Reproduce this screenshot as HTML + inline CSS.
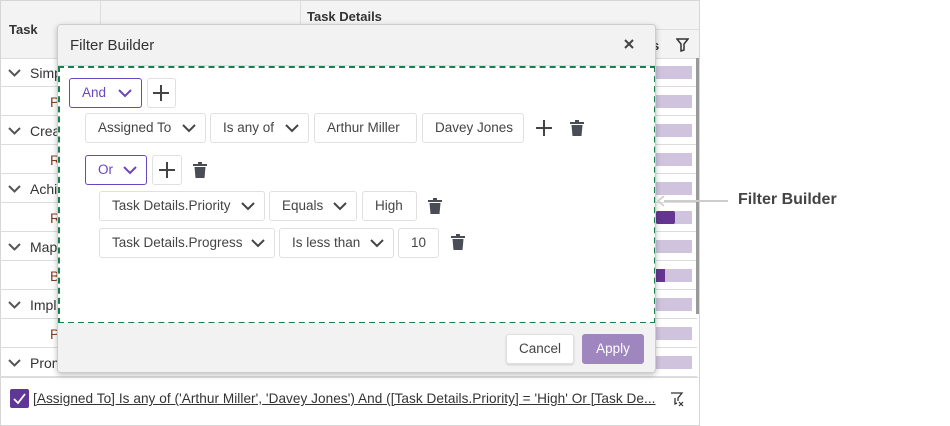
<!DOCTYPE html>
<html><head><meta charset="utf-8"><style>
*{box-sizing:border-box;margin:0;padding:0}
body{width:950px;height:426px;background:#fff;font-family:"Liberation Sans",sans-serif;font-size:13px;color:#333;position:relative;overflow:hidden}
.a{position:absolute}
.grid{left:0;top:0;width:700px;height:426px;border:1px solid #d6d6d6;background:#fff}
.hd{background:#f3f3f3}
.row{left:0;width:697px;height:29px;border-bottom:1px solid #ddd}
.bar{left:656px;width:36px;height:13px;background:#d0c3de}
.dlg{left:57px;top:24px;width:599px;height:349px;background:#fff;border:1px solid #ccc;border-radius:4px;box-shadow:0 2px 6px rgba(0,0,0,.25);overflow:hidden}
.box{position:absolute;border:1px solid #e0e0e0;border-radius:3px;height:30px;line-height:28px;padding-left:12px;color:#444;font-size:13.5px;background:#fff}
.box svg{position:absolute;right:9px;top:10px}
.pb{border-color:#6a45c0;color:#6a45c0}
.ic{position:absolute}
.tr{height:29px;position:relative;padding-left:22px}
.tr svg{position:absolute;left:0;top:4px}
</style></head><body>
<div class="a grid">
 <div class="a hd" style="left:0;top:0;width:698px;height:58px;border-bottom:1px solid #ddd"></div>
 <div class="a" style="left:99px;top:0;width:1px;height:58px;background:#ddd"></div>
 <div class="a" style="left:299px;top:0;width:1px;height:58px;background:#ddd"></div>
 <div class="a" style="left:300px;top:28px;width:398px;height:1px;background:#ddd"></div>
 <div class="a" style="left:8px;top:21px;font-weight:bold;font-size:13px">Task</div>
 <div class="a" style="left:306px;top:8px;font-weight:bold;font-size:13px">Task Details</div>
 <div class="a" style="left:651px;top:37px;font-weight:bold">s</div>
 <svg class="a" style="left:675px;top:37px" width="13" height="14" viewBox="0 0 13 14"><path d="M1 1h11L8 6v6l-3 1V6z" fill="none" stroke="#333" stroke-width="1.5"/></svg>
</div>
<div class="a row" style="top:58px"></div><div class="a row" style="top:87px"></div><div class="a row" style="top:116px"></div><div class="a row" style="top:145px"></div><div class="a row" style="top:174px"></div><div class="a row" style="top:203px"></div><div class="a row" style="top:232px"></div><div class="a row" style="top:261px"></div><div class="a row" style="top:290px"></div><div class="a row" style="top:319px"></div><div class="a row" style="top:348px"></div>
<div class="a" style="left:8px;top:65px;line-height:16px;font-size:14px">
<div class="tr"><svg width="13" height="9"><path d="M1 1l5.5 5.5L12 1" fill="none" stroke="#555" stroke-width="2"/></svg>Simp</div><div class="tr" style="padding-left:42px;color:#8a3a1c">P</div>
<div class="tr"><svg width="13" height="9"><path d="M1 1l5.5 5.5L12 1" fill="none" stroke="#555" stroke-width="2"/></svg>Crea</div><div class="tr" style="padding-left:42px;color:#8a3a1c">R</div>
<div class="tr"><svg width="13" height="9"><path d="M1 1l5.5 5.5L12 1" fill="none" stroke="#555" stroke-width="2"/></svg>Achi</div><div class="tr" style="padding-left:42px;color:#8a3a1c">R</div>
<div class="tr"><svg width="13" height="9"><path d="M1 1l5.5 5.5L12 1" fill="none" stroke="#555" stroke-width="2"/></svg>Map</div><div class="tr" style="padding-left:42px;color:#8a3a1c">B</div>
<div class="tr"><svg width="13" height="9"><path d="M1 1l5.5 5.5L12 1" fill="none" stroke="#555" stroke-width="2"/></svg>Impl</div><div class="tr" style="padding-left:42px;color:#8a3a1c">P</div>
<div class="tr"><svg width="13" height="9"><path d="M1 1l5.5 5.5L12 1" fill="none" stroke="#555" stroke-width="2"/></svg>Prom</div></div>
<div class="a bar" style="top:66px"></div><div class="a bar" style="top:95px"></div><div class="a bar" style="top:124px"></div><div class="a bar" style="top:153px"></div><div class="a bar" style="top:182px"></div>
<div class="a bar" style="top:211px"></div><div class="a" style="left:656px;top:211px;width:19px;height:13px;background:#643691;border-radius:2px"></div>
<div class="a bar" style="top:240px"></div>
<div class="a bar" style="top:269px"></div><div class="a" style="left:656px;top:269px;width:9px;height:13px;background:#643691"></div>
<div class="a bar" style="top:298px"></div><div class="a bar" style="top:327px"></div><div class="a bar" style="top:356px"></div>
<div class="a" style="left:696px;top:58px;width:3px;height:256px;background:#999"></div>
<div class="a" style="left:0;top:377px;width:699px;height:1px;background:#ddd"></div>
<div class="a" style="left:10px;top:389px;width:19px;height:19px;background:#5f3796;border-radius:2px"><svg width="19" height="19"><path d="M4 10l4 4 7-9" fill="none" stroke="#fff" stroke-width="1.8"/></svg></div>
<div class="a" style="left:33px;top:391px;font-size:13.6px;text-decoration:underline;color:#333;white-space:nowrap;letter-spacing:0.05px">[Assigned To] Is any of ('Arthur Miller', 'Davey Jones') And ([Task Details.Priority] = 'High' Or [Task De...</div>
<svg class="a" style="left:670px;top:392px" width="14" height="15"><path d="M1 1h11L8 6v3M5 6v6l2-1" fill="none" stroke="#333" stroke-width="1.3"/><path d="M9 10l4 4M13 10l-4 4" stroke="#333" stroke-width="1.2"/></svg>

<div class="a dlg">
 <div class="a" style="left:0;top:0;width:599px;height:41px;background:#f2f2f2;border-bottom:1px solid #ddd"></div>
 <div class="a" style="left:12px;top:12px;font-size:15px;color:#333">Filter Builder</div>
 <svg class="a" style="left:566px;top:14px" width="10" height="10"><path d="M1 1l8 8M9 1l-8 8" stroke="#444" stroke-width="2"/></svg>
 <div class="a" style="left:0;top:41px;width:598px;height:258px;border:2px dashed #1a7f4d"></div>
 <div class="a" style="left:0;top:298px;width:599px;height:51px;background:#f2f2f2"></div>
 <div class="box" style="left:448px;top:309px;width:68px;padding:0;text-align:center;box-shadow:0 1px 2px rgba(0,0,0,.15)">Cancel</div>
 <div class="box" style="left:524px;top:309px;width:62px;padding:0;text-align:center;background:#9f86bf;border-color:#9f86bf;color:#fff">Apply</div>
</div>

<div class="box pb" style="left:69px;top:78px;width:73px">And<svg width="14" height="9"><path d="M1 1l6 6 6-6" fill="none" stroke="#6a45c0" stroke-width="2"/></svg></div>
<div class="box" style="left:147px;top:78px;width:29px"></div>
<div class="box" style="left:85px;top:113px;width:121px">Assigned To<svg width="14" height="9"><path d="M1 1l6 6 6-6" fill="none" stroke="#444" stroke-width="2"/></svg></div>
<div class="box" style="left:210px;top:113px;width:99px">Is any of<svg width="14" height="9"><path d="M1 1l6 6 6-6" fill="none" stroke="#444" stroke-width="2"/></svg></div>
<div class="box" style="left:314px;top:113px;width:103px">Arthur Miller</div>
<div class="box" style="left:422px;top:113px;width:102px">Davey Jones</div>
<div class="box pb" style="left:85px;top:155px;width:62px">Or<svg width="14" height="9"><path d="M1 1l6 6 6-6" fill="none" stroke="#6a45c0" stroke-width="2"/></svg></div>
<div class="box" style="left:152px;top:155px;width:30px"></div>
<div class="box" style="left:99px;top:191px;width:166px">Task Details.Priority<svg width="14" height="9"><path d="M1 1l6 6 6-6" fill="none" stroke="#444" stroke-width="2"/></svg></div>
<div class="box" style="left:269px;top:191px;width:88px">Equals<svg width="14" height="9"><path d="M1 1l6 6 6-6" fill="none" stroke="#444" stroke-width="2"/></svg></div>
<div class="box" style="left:362px;top:191px;width:55px">High</div>
<div class="box" style="left:99px;top:228px;width:176px">Task Details.Progress<svg width="14" height="9"><path d="M1 1l6 6 6-6" fill="none" stroke="#444" stroke-width="2"/></svg></div>
<div class="box" style="left:279px;top:228px;width:115px">Is less than<svg width="14" height="9"><path d="M1 1l6 6 6-6" fill="none" stroke="#444" stroke-width="2"/></svg></div>
<div class="box" style="left:398px;top:228px;width:41px">10</div>

<svg class="ic" style="left:152px;top:84px" width="18" height="18"><path d="M9 1v16M1 9h16" stroke="#444" stroke-width="2"/></svg>
<svg class="ic" style="left:535px;top:119px" width="18" height="18"><path d="M9 1v16M1 9h16" stroke="#444" stroke-width="2"/></svg>
<svg class="ic" style="left:158px;top:161px" width="18" height="18"><path d="M9 1v16M1 9h16" stroke="#444" stroke-width="2"/></svg>
<svg class="ic" style="left:570px;top:120px" width="14" height="16"><path d="M0 2h14v2H0zM5 0h4v2H5zM1.5 5h11l-1 11h-9z" fill="#4a4d55"/></svg>
<svg class="ic" style="left:193px;top:162px" width="14" height="16"><path d="M0 2h14v2H0zM5 0h4v2H5zM1.5 5h11l-1 11h-9z" fill="#4a4d55"/></svg>
<svg class="ic" style="left:428px;top:198px" width="14" height="16"><path d="M0 2h14v2H0zM5 0h4v2H5zM1.5 5h11l-1 11h-9z" fill="#4a4d55"/></svg>
<svg class="ic" style="left:451px;top:234px" width="14" height="16"><path d="M0 2h14v2H0zM5 0h4v2H5zM1.5 5h11l-1 11h-9z" fill="#4a4d55"/></svg>

<svg class="a" style="left:656px;top:194px" width="74" height="14"><path d="M8 7h64" stroke="#ccc" stroke-width="2"/><path d="M8 2L2 7l6 5" fill="none" stroke="#ccc" stroke-width="1.5"/></svg>
<div class="a" style="left:738px;top:191px;font-size:16px;font-weight:bold;color:#444">Filter Builder</div>
</body></html>
